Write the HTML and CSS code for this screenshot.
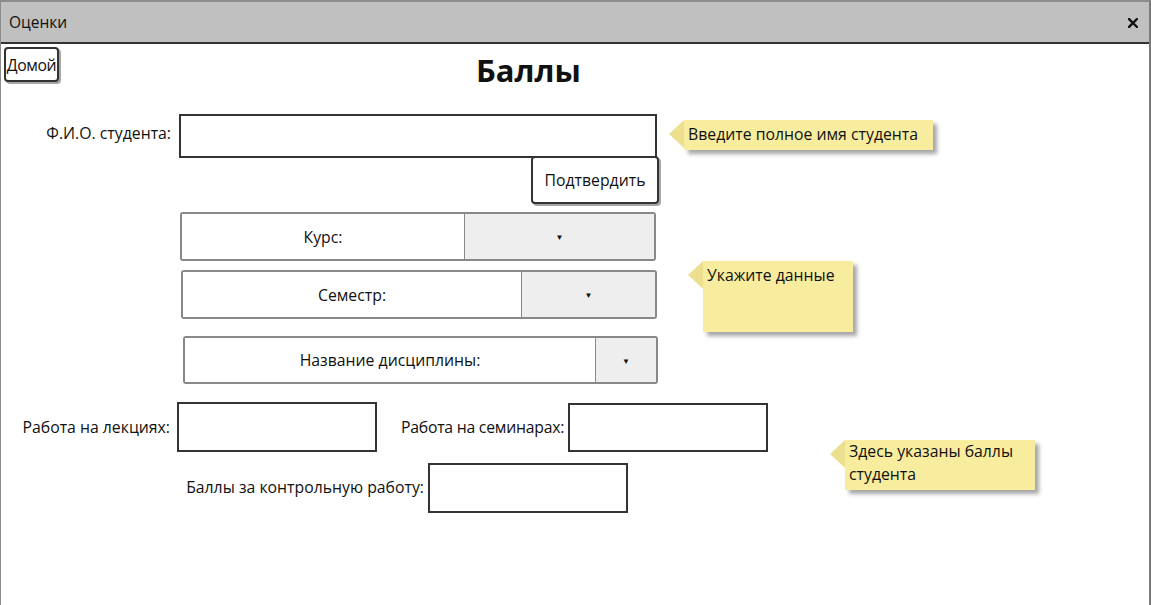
FILE: index.html
```html
<!DOCTYPE html>
<html lang="ru">
<head>
<meta charset="utf-8">
<title>Оценки</title>
<link rel="stylesheet" href="styles.css">
</head>
<body>
<div class="window">
  <div class="titlebar">
    <span class="title">Оценки</span>
    <svg class="close" width="10" height="10" viewBox="0 0 10 10"><path d="M1 1 L9 9 M9 1 L1 9" stroke="#111" stroke-width="2.4" stroke-linecap="square"/></svg>
  </div>
  <div class="content">
    <div class="header-row">
      <button class="btn btn-home">Домой</button>
      <h1 class="heading">Баллы</h1>
    </div>

    <div class="field-row name-row">
      <label class="label label-name">Ф.И.О. студента:</label>
      <div class="input input-name"></div>
    </div>

    <button class="btn btn-confirm">Подтвердить</button>

    <div class="select select-course">
      <div class="select-text">Курс:</div>
      <div class="select-arrow">▼</div>
    </div>
    <div class="select select-semester">
      <div class="select-text">Семестр:</div>
      <div class="select-arrow">▼</div>
    </div>
    <div class="select select-discipline">
      <div class="select-text">Название дисциплины:</div>
      <div class="select-arrow">▼</div>
    </div>

    <div class="field-row work-row">
      <label class="label label-lect">Работа на лекциях:</label>
      <div class="input input-score"></div>
      <label class="label label-sem">Работа на семинарах:</label>
      <div class="input input-score input-sem"></div>
    </div>

    <div class="field-row control-row">
      <label class="label label-ctrl">Баллы за контрольную работу:</label>
      <div class="input input-score"></div>
    </div>
  </div>

  <div class="note note-1">Введите полное имя студента</div>
  <div class="note note-2">Укажите данные</div>
  <div class="note note-3">Здесь указаны баллы<br>студента</div>
</div>
</body>
</html>
```

FILE: styles.css
```css
* { box-sizing: border-box; }
html, body { margin: 0; padding: 0; background: #fff; }
body {
  font-family: "Open Sans", "Noto Sans", sans-serif;
  font-size: 15.8px;
  color: #111;
}
.window {
  position: relative;
  width: 1151px;
  height: 605px;
  border-top: 2px solid #8c8c8c;
  border-left: 1px solid #8c8c8c;
  border-right: 2px solid #7a7a7a;
  overflow: hidden;
}
.titlebar {
  height: 42px;
  background: #c0c0c0;
  border-bottom: 2px solid #333;
  display: flex;
  align-items: center;
  justify-content: space-between;
  padding: 0 11px 0 8px;
}
.title { font-size: 15.5px; line-height: 20px; }
.close { display: block; margin-top: 2px; }

.content { padding: 0; }

.header-row {
  display: flex;
  align-items: flex-start;
  height: 42px;
  margin-top: 3px;
}
.btn {
  font-family: inherit;
  font-size: 15.8px;
  color: #111;
  background: #fff;
  border: 2px solid #333;
  border-radius: 4px;
  box-shadow: 2px 2px 0 rgba(0,0,0,0.35);
  padding: 0;
  cursor: default;
}
.btn-home {
  width: 55px;
  height: 35px;
  margin-left: 3px;
  letter-spacing: -0.4px;
}
.heading {
  margin: 4px 0 0 417px;
  font-size: 31px;
  line-height: 38px;
  font-weight: 700;
}

.field-row { display: flex; align-items: flex-start; }
.label { display: block; line-height: 20px; white-space: nowrap; }
.input {
  border: 2px solid #333;
  background: #fff;
}
.name-row { margin-top: 25px; }
.label-name { width: 170px; text-align: right; margin-top: 9px; margin-right: 8px; }
.input-name { width: 478px; height: 44px; }

.btn-confirm {
  display: block;
  width: 128px;
  height: 48px;
  margin: -2px 0 0 530px;
  position: relative;
}

.select {
  display: flex;
  height: 49px;
  border: 2px solid #888;
  border-radius: 3px;
  overflow: hidden;
}
.select-text {
  display: flex;
  align-items: center;
  justify-content: center;
  border-right: 1px solid #888;
  background: #fff;
}
.select-arrow {
  flex: 1;
  display: flex;
  align-items: center;
  justify-content: center;
  background: #eeeeee;
  font-size: 8px;
}
.select-course { width: 476px; margin: 8px 0 0 179px; }
.select-course .select-text { width: 283px; }
.select-semester { width: 476px; margin: 9px 0 0 180px; }
.select-semester .select-text { width: 339px; }
.select-discipline { width: 475px; height: 48px; margin: 17px 0 0 182px; }
.select-discipline .select-text { width: 411px; }

.work-row { margin-top: 18px; }
.label-lect { width: 169px; text-align: right; margin: 15px 7px 0 0; }
.input-score { width: 200px; height: 50px; flex: none; }
.label-sem { width: 162px; text-align: right; margin: 15px 5px 0 24px; letter-spacing: -0.25px; }
.input-sem { margin-top: 1px; height: 49px; }

.control-row { margin-top: 11px; }
.label-ctrl { width: 238px; text-align: right; margin: 14px 4px 0 185px; }

.note {
  position: absolute;
  background: #f8ed9f;
  box-shadow: 4px 4px 4px rgba(0,0,0,0.35);
  line-height: 23px;
  padding: 3px 4px;
  white-space: nowrap;
}
.note::before {
  content: "";
  position: absolute;
  left: -15px;
  top: 0;
  border-style: solid;
  border-width: 14px 15px 14px 0;
  border-color: transparent #ece08f transparent transparent;
}
.note-1 { left: 683px; top: 118px; width: 249px; height: 30px; padding-top: 3px; }
.note-2 { left: 702px; top: 259px; width: 150px; height: 71px; }
.note-3 { left: 844px; top: 438px; width: 190px; height: 50px; padding-top: 0; }
```
